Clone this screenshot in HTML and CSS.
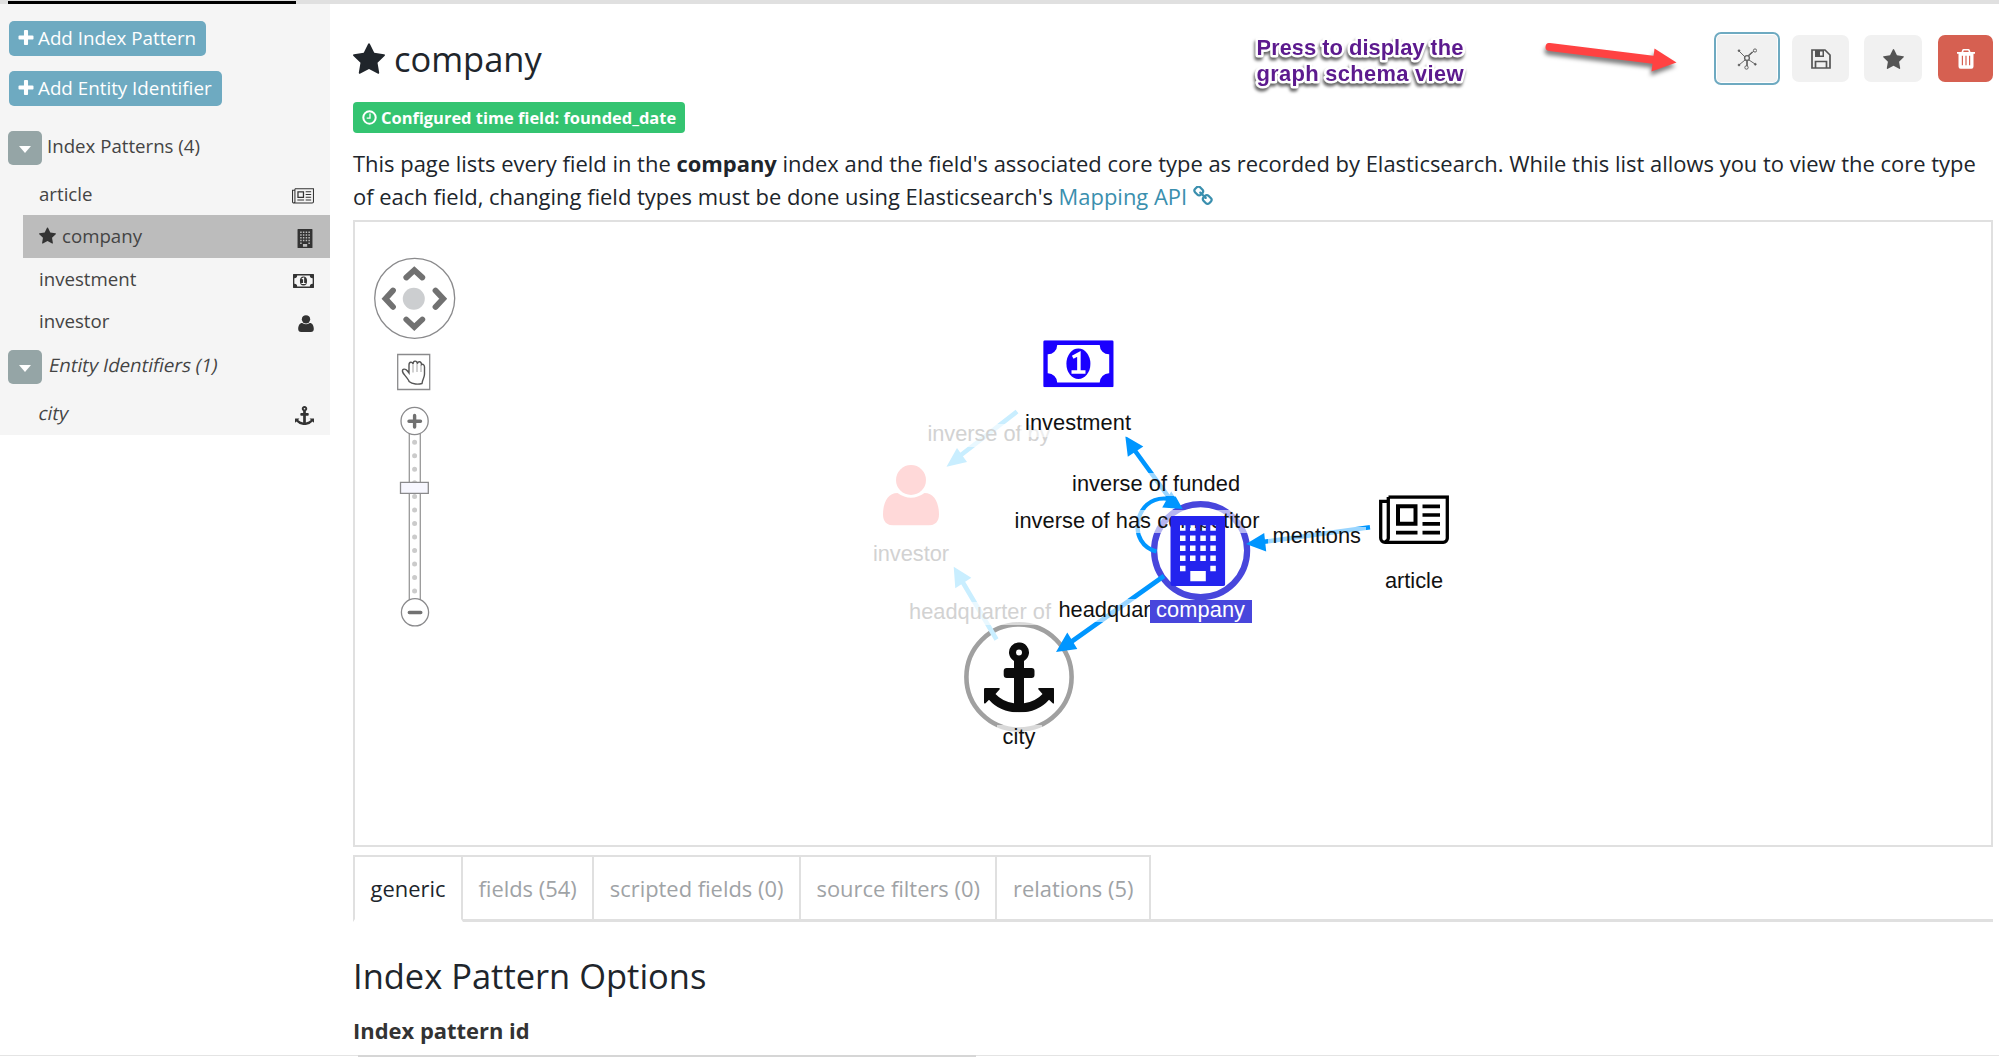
FILE: index.html
```html
<!DOCTYPE html>
<html lang="en">
<head>
<meta charset="utf-8">
<title>company - Index Patterns</title>
<link rel="stylesheet" href="styles.css">
</head>
<body>
<svg class="defs" width="0" height="0" aria-hidden="true">
  <symbol id="plus" viewBox="192 128 1408 1408"><path d="M1600 736v192q0 40-28 68t-68 28h-416v416q0 40-28 68t-68 28h-192q-40 0-68-28t-28-68v-416h-416q-40 0-68-28t-28-68v-192q0-40 28-68t68-28h416v-416q0-40 28-68t68-28h192q40 0 68 28t28 68v416h416q40 0 68 28t28 68z"/></symbol>
  <symbol id="star" viewBox="64 32 1664 1587"><path d="M1728 647q0 22-26 48l-363 354 86 500q1 7 1 20 0 21-10.5 35.5t-30.5 14.5q-19 0-40-12l-449-236-449 236q-22 12-40 12-21 0-31.5-14.5t-10.5-35.5q0-6 2-20l86-500-364-354q-25-27-25-48 0-37 56-46l502-73 225-455q19-41 49-41t49 41l225 455 502 73q56 9 56 46z"/></symbol>
  <symbol id="link" viewBox="64 64 1664 1664"><path d="M1520 1216q0-40-28-68l-208-208q-28-28-68-28-42 0-72 32 3 3 19 18.5t21.5 21.5 15 19 13 25.5 3.5 27.5q0 40-28 68t-68 28q-15 0-27.5-3.5t-25.5-13-19-15-21.5-21.5-18.5-19q-33 31-33 73 0 40 28 68l206 207q27 27 68 27 40 0 68-26l147-146q28-28 28-67zm-703-705q0-40-28-68l-206-207q-28-28-68-28-39 0-68 27l-147 146q-28 28-28 67 0 40 28 68l208 208q27 27 68 27 42 0 72-31-3-3-19-18.5t-21.5-21.5-15-19-13-25.5-3.5-27.5q0-40 28-68t68-28q15 0 27.5 3.5t25.5 13 19 15 21.5 21.5 18.5 19q33-31 33-73zm895 705q0 120-85 203l-147 146q-83 83-203 83-121 0-204-85l-206-207q-83-83-83-203 0-123 88-209l-88-88q-86 88-208 88-120 0-204-84l-208-208q-84-84-84-204t85-203l147-146q83-83 203-83 121 0 204 85l206 207q83 83 83 203 0 123-88 209l88 88q86-88 208-88 120 0 204 84l208 208q84 84 84 204z"/></symbol>
  <symbol id="newspaper" viewBox="0 0 70 49">
    <path d="M9.5 1.7H68.3V43a4 4 0 0 1-4 4H6a4.300 4.300 0 0 1-4.300-4.300V6H9.500M9.300 1.700V42a4 4 0 0 1-3.500 4.500" fill="none" stroke="currentColor" stroke-width="3.300"/>
    <path d="M19 11h17.500v17.500H19z" fill="none" stroke="currentColor" stroke-width="4"/>
    <path d="M43.500 11H61M43.500 19.700H61M43.500 28.500H61M43.500 37.300H61M17 37.300h21.500" stroke="currentColor" stroke-width="3.700"/>
  </symbol>
  <symbol id="building" viewBox="0 0 55 70"><path fill-rule="evenodd" d="M2 0h51a2 2 0 0 1 2 2v66a2 2 0 0 1-2 2H2a2 2 0 0 1-2-2V2a2 2 0 0 1 2-2zM9.700 9.300h5.500v5.500H9.700zM19.700 9.300h5.500v5.500h-5.500zM30 9.300h5.500v5.500H30zM40 9.300h5.500v5.500H40zM9.700 19.500h5.500V25H9.700zM19.700 19.500h5.500V25h-5.500zM30 19.500h5.500V25H30zM40 19.500h5.500V25H40zM9.700 29.500h5.500V35H9.700zM19.700 29.500h5.500V35h-5.500zM30 29.500h5.500V35H30zM40 29.500h5.500V35H40zM9.700 39.500h5.500V45H9.700zM19.700 39.500h5.500V45h-5.500zM30 39.500h5.500V45H30zM40 39.500h5.500V45H40zM9.700 49.700h5.500v5.500H9.700zM40 49.700h5.500v5.500H40zM20 55h15.500v10.300H20z"/></symbol>
  <symbol id="money" viewBox="0 0 70.500 47"><path fill-rule="evenodd" d="M1.500 0h67.500a1.500 1.500 0 0 1 1.500 1.500v44a1.500 1.500 0 0 1-1.500 1.500H1.500A1.500 1.500 0 0 1 0 45.500v-44A1.500 1.500 0 0 1 1.500 0zM14 4.700a9.300 9.300 0 0 1-9.500 9.300v19a9.300 9.300 0 0 1 9.500 9.300h42.500a9.300 9.300 0 0 1 9.500-9.300V14a9.300 9.300 0 0 1-9.500-9.300z"/><ellipse cx="35.200" cy="23.500" rx="12" ry="15.300"/><path d="M29.500 17l6.200-3.300V32M28.300 31.800h14" fill="none" stroke="#fff" stroke-width="3.500"/></symbol>
  <symbol id="user" viewBox="0 0 56 61"><circle cx="28" cy="15.500" r="15"/><path d="M14.500 28.500Q28 38 41.500 28.500C51 28.500 56 38 56 50c0 7-4 11-10.500 11h-35C4 61 0 57 0 50c0-12 5-21.500 14.500-21.500z"/></symbol>
  <symbol id="anchor" viewBox="0 0 70 70"><path fill-rule="evenodd" d="M40 18.800V25.700h7.500a3 3 0 0 1 3 3v4a3 3 0 0 1-3 3H40v25.300q12-2 18.500-9.300l-4-4.500q-1-1.500.8-1.500H69q1.200 0 1.200 1.200v13.300q0 1.800-1.500.8L65 57.500Q54 70.200 35 70.200T5 57.500L1.500 61Q0 62 0 60.200V46.900q0-1.200 1.200-1.200h13.500q1.800 0 .8 1.500l-4 4.500Q18 59 30 61V35.700h-7.300a3 3 0 0 1-3-3v-4a3 3 0 0 1 3-3H30v-6.900a10 10 0 1 1 10 0zM38 10.300a3 3 0 1 0-6 0 3 3 0 0 0 6 0z"/></symbol>
</svg>

<div class="topbar"><div class="topbar-active"></div></div>
<div class="layout">
  <aside class="sidebar">
    <button class="add"><svg><use href="#plus"/></svg>Add Index Pattern</button>
    <button class="add"><svg><use href="#plus"/></svg>Add Entity Identifier</button>
    <div class="group"><span class="caret"></span><span>Index Patterns (4)</span></div>
    <ul class="items">
      <li><span>article</span><svg class="i-news"><use href="#newspaper"/></svg></li>
      <li class="selected"><svg class="i-star"><use href="#star"/></svg><span>company</span><svg class="i-building"><use href="#building"/></svg></li>
      <li><span>investment</span><svg class="i-money"><use href="#money"/></svg></li>
      <li><span>investor</span><svg class="i-user"><use href="#user"/></svg></li>
    </ul>
    <div class="group entity"><span class="caret"></span><span class="slanted">Entity Identifiers (1)</span></div>
    <ul class="items"><li><span class="slanted">city</span><svg class="i-anchor"><use href="#anchor"/></svg></li></ul>
  </aside>

  <main>
    <header>
      <h1><svg><use href="#star"/></svg>company</h1>
      <div class="actions">
        <button class="graph-btn"><svg width="20" height="22" viewBox="0 0 20 22" fill="none" stroke="#666" stroke-width="1"><path d="M2 3l6 6M11 8l6-5M8 12l-6 5M12 12l6 4M10 12v6"/><path d="M10.500 8.500l5-4.500M10 12v6" stroke-width="1.500"/><circle cx="10" cy="10" r="2.400" fill="#f1f1f1" stroke-width="1.400"/><circle cx="18" cy="2.500" r="1.600"/><circle cx="9.500" cy="19.500" r="1.700"/><g fill="#555" stroke-width=".6"><circle cx="2" cy="2.700" r="1"/><circle cx="2" cy="17" r="1"/><circle cx="18.300" cy="16.300" r="1"/></g></svg></button>
        <button class="save-btn"><svg width="20" height="20" viewBox="0 0 20 20" fill="none" stroke="#555" stroke-width="1.700"><path d="M1 1h13l5 5v13H1zM4.500 18.500V12.500H15.500v6"/><path d="M4 1h9v7H4z" fill="#555" stroke="none"/><path d="M9 2.500h2.500v4H9z" fill="#f1f1f1" stroke="none"/></svg></button>
        <button class="fav-btn"><svg width="21" height="20"><use href="#star"/></svg></button>
        <button class="del-btn"><svg width="18" height="20" viewBox="0 0 18 20"><path fill-rule="evenodd" fill="#fff" d="M0 3h4.500L5.300.8Q5.600 0 6.500 0h5q.9 0 1.200.8L13.500 3H18v1.700h-1.500V17.500q0 2.200-2 2.200h-11q-2 0-2-2.200V4.700H0zM6.200 3h5.600l-.6-1.400H6.800zM4.800 6.800v9.500H6V6.800zM8.400 6.800v9.500h1.200V6.800zM12 6.800v9.500h1.200V6.800z"/></svg></button>
      </div>
    </header>
    <div class="badge"><svg width="15" height="15" viewBox="0 0 15 15" fill="none" stroke="#fff" stroke-width="2"><circle cx="7.500" cy="7.500" r="6.200"/><path d="M8 3.500v4.700H4.700" stroke-width="1.300"/></svg>Configured time field: founded_date</div>
    <p class="intro">This page lists every field in the <b>company</b> index and the field's associated core type as recorded by Elasticsearch. While this list allows you to view the core type<br>of each field, changing field types must be done using Elasticsearch's <a>Mapping API <svg><use href="#link"/></svg></a></p>

    <section class="graph">
      <svg viewBox="355 222 1636 622" width="1636" height="622">
        <g fill="none" stroke="#8a8a8c" stroke-width="1.300">
          <circle cx="414.700" cy="298.300" r="40"/>
          <path d="M397.700 354.500h32v35h-32z"/>
          <path d="M409.300 434v166M420.300 434v166" stroke="#999"/>
        </g>
        <circle cx="413.800" cy="298.800" r="11" fill="#ccced0"/>
        <path d="M406.300 277.500l8-7.300 8 7.300M406.300 319.500l8 7.500 8-7.500M393 290.500l-7.500 8.200 7.500 8.200M435.500 290.500l7.700 8.200-7.700 8.200" fill="none" stroke="#717171" stroke-width="5.800" stroke-linecap="round"/>
        <path d="M410 382.500c-3-5-6-7-6.500-9.500-.5-3 3-3.200 5-.5l1.500 2v-8c0-3.500 3.500-3.500 4-.8 0-4 4-4 4.300-.5 1-3 4.200-2.500 4.200 1 1.500-1 3 .2 3 2.300v7c0 4-2 5-2.500 9.500-3.500 1-9.500 1-13-2z" transform="translate(-1 -1.500)" fill="#fff" stroke="#555" stroke-width="1.400"/>
        <path d="M413 364.500v8M417 364v8M421 365v7" stroke="#999" stroke-width=".9"/>
        <path d="M414.600 442.300V596" stroke="#cbcbcb" stroke-width="5" stroke-linecap="round" stroke-dasharray="0 13.520"/>
        <g fill="#fff" stroke="#8a8a8c" stroke-width="1.300"><circle cx="414.600" cy="421" r="13.600"/><circle cx="415" cy="612.300" r="13.600"/><path d="M400.500 482.300h27.800v11h-27.800z" fill="#f7f7ff"/></g>
        <path d="M409 421.200h11.500M414.600 415.500V427M409.300 612.500h11.500" stroke="#717171" stroke-width="3.400" stroke-linecap="round"/>

        <circle cx="1200.600" cy="550.600" r="46.500" fill="none" stroke="#4846dc" stroke-width="6.200"/>
        <circle cx="1019" cy="677" r="52.600" fill="none" stroke="#a0a0a0" stroke-width="4.600"/>

        <g fill="none" stroke="#c9eeff" stroke-width="4.600"><path d="M1017 411.500L961 455M962 581l34.500 58.500"/></g>
        <path d="M946.500 466.700L957 448l10 14zM953.700 566.700l17.600 11-16 10.500z" fill="#c9eeff"/>
        <g fill="none" stroke="#0096ff" stroke-width="4.600">
          <path d="M1133 448l40 55M1164 576l-93 66M1370 527.300l-106 14.500"/>
          <path d="M1156.500 551.500C1142 548 1136 535 1138 523C1140 507 1151 498.500 1164 498.500Q1170 498.500 1176 502" stroke-width="4.200"/>
        </g>
        <path d="M1125.300 436l18 10.500-15.500 10.300zM1182.700 509l-20.500-1.500 9-16zM1182.700 509l-15-11 8-1.500zM1056 652l11.300-19.500 10 16.500zM1246 544l18.200-11 2 18.500z" fill="#0096ff"/>

        <g class="plate">
          <path d="M923 424h134v23H923zM904 602h152v23H904zM1067 473h179v23h-179zM1009 510h256v23h-256zM1054 599h100v23h-100zM1268 527h98v23h-98z"/>
        </g>
        <g class="labels faded">
          <text x="927.500" y="441.300" textLength="123">inverse of by</text>
          <text x="909" y="618.800" textLength="142">headquarter of</text>
          <text x="873" y="560.700" textLength="76">investor</text>
        </g>
        <g class="labels">
          <text x="1072" y="490.700" textLength="168">inverse of funded</text>
          <text x="1014.500" y="527.600" textLength="245">inverse of has competitor</text>
          <text x="1058.500" y="616.500">headquar</text>
          <text x="1272.500" y="543" textLength="88.500">mentions</text>
        </g>
        <path class="plate" d="M1020 413h117v24h-117zM997 725h45v24h-45z"/>
        <g class="labels">
          <text x="1025" y="430" textLength="106">investment</text>
          <text x="1385" y="587.900" textLength="58">article</text>
          <text x="1002.500" y="743.700" textLength="33">city</text>
        </g>
        <path d="M1150 600h102v23h-102z" fill="#4846dc"/>
        <g class="labels light"><text x="1156" y="617" textLength="89">company</text></g>

        <use href="#money" x="1043.200" y="340.300" width="70.500" height="47" fill="#1a00ff"/>
        <use href="#user" x="883" y="464.500" width="56" height="61" fill="#ffd9d9"/>
        <use href="#newspaper" x="1379" y="495.300" width="70" height="49" color="#000"/>
        <use href="#building" x="1170.300" y="516" width="55" height="70" fill="#2424ee"/>
        <use href="#anchor" x="984" y="642.200" width="70" height="70" fill="#0c0c0c"/>
      </svg>
    </section>

    <nav class="tabs"><a class="active">generic</a><a>fields (54)</a><a>scripted fields (0)</a><a>source filters (0)</a><a>relations (5)</a><i></i></nav>
    <h2>Index Pattern Options</h2>
    <label>Index pattern id</label>
  </main>
</div>
<footer><div class="input-edge"></div></footer>

<svg class="callout" viewBox="1240 25 450 75" width="450" height="75">
  <g class="callout-text"><text x="1256.500" y="55" textLength="207">Press to display the</text><text x="1256.500" y="81" textLength="207">graph schema view</text></g>
  <g class="callout-arrow" fill="#ff4242"><path d="M1549.500 47L1655 60" stroke="#ff4242" stroke-width="8" stroke-linecap="round"/><path d="M1676.500 62.500L1654.500 48.500 1651.500 71.500z"/></g>
</svg>
</body>
</html>
```

FILE: styles.css
```css
* { box-sizing: border-box; }
body { margin: 0; height: 1057px; overflow: hidden; background: #fff; color: #20252b; font-family: "Open Sans", "Noto Sans", sans-serif; }
button { border: 0; font: inherit; padding: 0; margin: 0; }
svg { display: block; flex: none; }
.defs { position: absolute; }
ul { list-style: none; margin: 0; padding: 0; }

.topbar { height: 4px; padding: 1px 0 0 8px; background: #e0e0e0; }
.topbar-active { width: 288px; height: 3px; background: #000; }
.layout { display: flex; align-items: flex-start; height: 1051px; }

.sidebar { width: 330px; height: 431px; padding-top: 17px; background: #f5f5f5; color: #444; font-size: 18.67px; display: flex; flex-direction: column; align-items: flex-start; }
.add { display: flex; align-items: center; gap: 4px; height: 35px; margin: 0 0 15px 9px; padding: 0 10px 2px 9px; border-radius: 5px; background: #6eaac1; color: #fff; font-size: 18.800px; white-space: nowrap; }
.add svg { width: 16px; height: 15px; fill: #fff; }
.group { display: flex; width: 100%; height: 34px; margin-top: 10px; padding-left: 8px; gap: 5px; line-height: 29px; }
.group.entity { margin-top: 8px; gap: 7px; }
.slanted { transform: skewX(-12deg); }
.caret { width: 34px; height: 34px; border-radius: 5px; background: #95a5a6; display: grid; place-items: center; }
.caret::after { content: ""; margin-top: 2px; border: 6px solid transparent; border-top: 7px solid #fff; border-bottom: 0; }
.items { width: 100%; padding: 8px 0 0 23px; }
.items li { display: flex; align-items: center; height: 42.300px; padding: 0 16px; line-height: 40px; }
.items li > span { margin-top: 0; margin-right: auto; }
.items .selected { background: #bcbcbc; }
.items svg { fill: #333; color: #333; margin-top: 4px; }
.items .i-star { width: 17px; height: 17px; margin: -2px 6px 0 0; }
.i-news { width: 22px; height: 16px; }
.i-building { width: 16px; height: 19px; margin-right: 1px; }
.i-money { width: 21px; height: 14px; }
.i-user { width: 16px; height: 17px; }
.i-anchor { width: 19px; height: 19px; }

main { flex: 1; padding: 0 6px 0 23px; display: flex; flex-direction: column; align-items: flex-start; }
header { width: 100%; height: 98px; display: flex; justify-content: space-between; }
h1 { display: flex; gap: 9px; margin: 30px 0 0; font-size: 34.450px; line-height: 50px; font-weight: 400; }
h1 svg { width: 32px; height: 31px; margin-top: 9px; fill: #20252b; }
.actions { display: flex; align-items: flex-start; padding-top: 31px; }
.actions button { height: 47px; border-radius: 7px; background: #f1f1f1; display: grid; place-items: center; fill: #555; }
.actions .graph-btn { width: 66px; height: 53px; margin-top: -3px; border: 2px solid #6eaac1; box-shadow: inset 0 0 0 1px #fff; }
.save-btn { width: 57px; margin-left: 12px; }
.fav-btn { width: 58px; margin-left: 15px; }
.actions .del-btn { width: 55px; margin-left: 16px; background: #d66051; }

.badge { display: flex; align-items: center; gap: 4px; height: 31px; padding: 0 9px; border-radius: 4px; background: #34c471; color: #fff; font-size: 16.450px; font-weight: 700; white-space: nowrap; line-height: 28px; }
.intro { margin: 14px 0 0; font-size: 21.950px; line-height: 33px; white-space: nowrap; }
.intro a { color: #3a8fae; }
.intro svg { display: inline-block; width: 20px; height: 20px; fill: #3a8fae; vertical-align: -1px; }

.graph { width: 1640px; height: 627px; margin-top: 7px; border: 2px solid #e0e0e0; }
.labels { font: 21.800px "Liberation Sans", Arial, sans-serif; fill: #111; }
.labels.faded { fill: #d2d2d2; }
.labels.light { fill: #fff; }
.plate { fill: #fff; opacity: .6; }

.tabs { display: flex; width: 100%; height: 67px; margin-top: 8px; font-size: 21.900px; line-height: 63px; white-space: nowrap; }
.tabs a { padding: 0 15.550px; border-top: 2px solid #e0e0e0; border-right: 2px solid #e0e0e0; border-bottom: 3px solid #e0e0e0; color: #9fa3a6; }
.tabs .active { border-left: 2px solid #e0e0e0; border-bottom-color: #fff; color: #20252b; }
.tabs i { flex: 1; border-bottom: 3px solid #e0e0e0; }
h2 { margin: 29px 0 0; font-size: 34.480px; line-height: 50px; font-weight: 400; }
label { margin-top: 14px; font-size: 21.950px; line-height: 32px; font-weight: 700; color: #333; }
footer { height: 1px; padding-left: 358px; background: #e4e4e4; }
.input-edge { width: 618px; height: 2px; background: #d6d6d6; }

.callout { position: absolute; left: 1240px; top: 25px; }
.callout-text { font: 700 22px "Liberation Sans", Arial, sans-serif; fill: #5c1a8e; stroke: #fff; stroke-width: 5px; stroke-linejoin: round; paint-order: stroke; filter: drop-shadow(-1px 3px 1.500px rgba(0,0,0,.6)); }
.callout-arrow { filter: drop-shadow(-1px 4px 2px rgba(0,0,0,.5)); }
```
